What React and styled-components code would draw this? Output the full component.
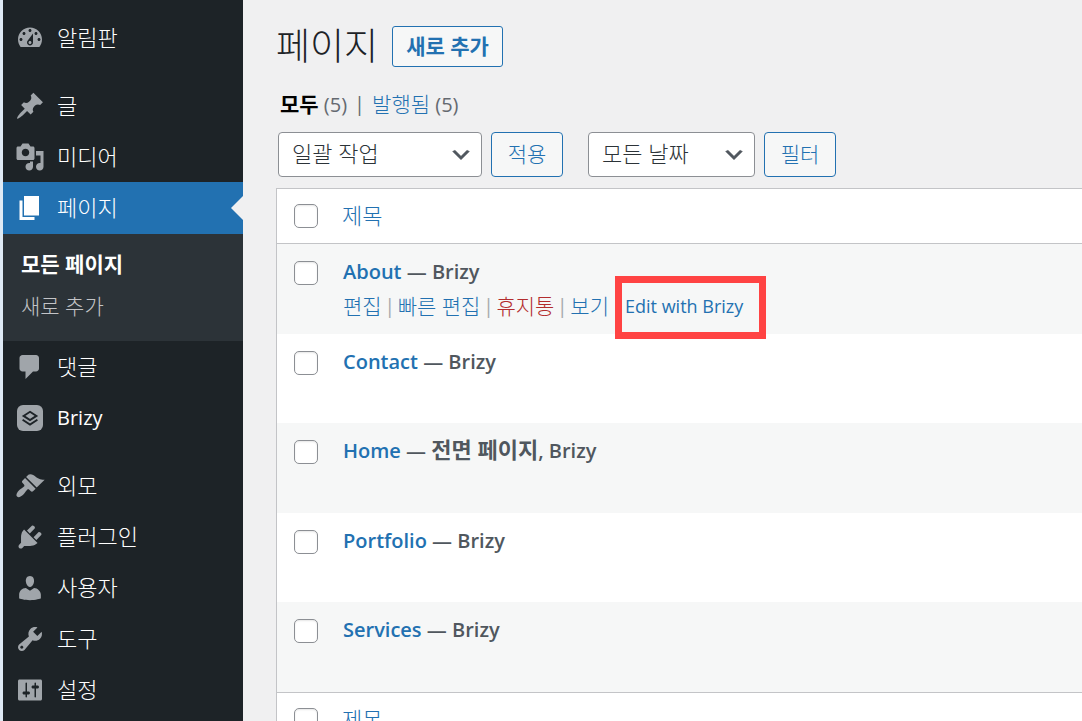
import React, { useState } from 'react';
import styled, { createGlobalStyle } from 'styled-components';

const GlobalStyle = createGlobalStyle`
  * {
    box-sizing: border-box;
  }
  body {
    margin: 0;
    background: #f0f0f1;
    color: #3c434a;
    font-family: 'Open Sans', 'Noto Sans CJK KR', sans-serif;
    font-size: 20px;
    line-height: 28px;
  }
  a {
    color: #2271b1;
    text-decoration: none;
  }
`;

const Page = styled.div`
  display: flex;
  min-height: 100vh;
  max-height: 100vh;
  overflow: hidden;
  border-left: 3px solid #dfeaf5;
`;

const Sidebar = styled.nav`
  flex: none;
  width: 240px;
  padding-top: 12px;
  background: #1d2327;
`;

const MenuGroup = styled.ul`
  list-style: none;
  margin: 0 0 17px;
  padding: 0;
`;

const MenuLink = styled.a`
  position: relative;
  display: flex;
  align-items: center;
  gap: 12px;
  height: ${props => (props.$current ? '52px' : '51px')};
  padding-left: 12px;
  color: #fff;
  background: ${props => (props.$current ? '#2271b1' : 'none')};
  svg {
    width: 30px;
    height: 30px;
    fill: ${props => (props.$current ? '#fff' : '#a0a5aa')};
  }
  &::after {
    content: '';
    display: ${props => (props.$current ? 'block' : 'none')};
    position: absolute;
    right: 0;
    border: 12px solid transparent;
    border-left-width: 0;
    border-right-color: #f0f0f1;
  }
`;

const MenuLabel = styled.span`
  padding-bottom: ${props => (props.$latin ? '0' : '2px')};
  font-size: ${props => (props.$latin ? '20px' : '22px')};
  font-weight: ${props => (props.$latin ? 400 : 300)};
`;

const SubMenu = styled.ul`
  list-style: none;
  margin: 0;
  padding: 9px 18px 14px;
  background: #2c3338;
`;

const SubLink = styled.a`
  display: block;
  font-size: 21px;
  line-height: 42px;
  font-weight: ${props => (props.$current ? 600 : 300)};
  color: ${props => (props.$current ? '#fff' : '#c3c4c7')};
`;

const Content = styled.main`
  flex: 1;
  min-width: 0;
  padding: 22px 0 0 33px;
`;

const Heading = styled.div`
  display: flex;
  align-items: center;
  gap: 14px;
  h1 {
    margin: 0;
    font-size: 37px;
    font-weight: 300;
    line-height: 48px;
    color: #1d2327;
  }
`;

const AddLink = styled.a`
  padding: 0 13px;
  border: 1px solid #2271b1;
  border-radius: 3px;
  background: #f6f7f7;
  font-size: 21px;
  font-weight: 600;
  line-height: 39px;
`;

const Filters = styled.ul`
  display: flex;
  gap: 7px;
  list-style: none;
  margin: 20px 0 13px;
  padding: 0 4px;
  color: #646970;
  strong {
    color: #000;
    font-size: 21px;
    font-weight: 600;
  }
  a {
    font-size: 21px;
    font-weight: 300;
  }
`;

const Toolbar = styled.form`
  display: flex;
  gap: 9px;
  padding-left: 2px;
  margin-bottom: 11px;
`;

const SelectWrap = styled.div`
  position: relative;
  width: ${props => props.$width}px;
  svg {
    position: absolute;
    right: 9px;
    top: 11px;
    width: 24px;
    height: 24px;
    fill: #50575e;
    stroke: #50575e;
    stroke-width: 0.4;
    pointer-events: none;
  }
`;

const Select = styled.select`
  appearance: none;
  width: 100%;
  height: 45px;
  padding: 0 36px 4px 13px;
  border: 1px solid #8c8f94;
  border-radius: 4px;
  background: #fff;
  color: #2c3338;
  font-family: inherit;
  font-size: 22px;
  font-weight: 300;
`;

const Button = styled.button`
  width: 72px;
  height: 45px;
  margin-right: ${props => props.$after || 0}px;
  padding: 0 0 4px;
  border: 1px solid #2271b1;
  border-radius: 4px;
  background: #f6f7f7;
  color: #2271b1;
  font-family: inherit;
  font-size: 21px;
  font-weight: 300;
`;

const Table = styled.table`
  width: 100%;
  border-collapse: separate;
  border-spacing: 0;
  border: 1px solid #c3c4c7;
  border-right: 0;
  background: #fff;
  th, td {
    padding: 0;
    text-align: left;
    vertical-align: top;
    font-weight: 400;
  }
  thead th {
    height: 55px;
    padding-top: 12px;
    border-bottom: 1px solid #c3c4c7;
  }
  tfoot th {
    height: 55px;
    padding-top: 12px;
    border-top: 1px solid #c3c4c7;
  }
  tr > :first-child {
    width: 65px;
    padding-top: 15px;
    padding-left: 17px;
  }
`;

const Row = styled.tr`
  height: 89px;
  &:nth-child(odd) {
    height: 90px;
    background: #f6f7f7;
  }
  > :nth-child(2) {
    padding: 14px 0 0 1px;
  }
  && > :first-child {
    padding-top: 17px;
  }
`;

const Checkbox = styled.input`
  appearance: none;
  display: block;
  width: 24px;
  height: 24px;
  margin: 0;
  border: 1px solid #8c8f94;
  border-radius: 5px;
  background: #fff;
  box-shadow: inset 0 1px 2px rgba(0, 0, 0, 0.1);
  &:checked {
    background: #2271b1;
  }
`;

const SortLink = styled.a`
  font-size: 22px;
  font-weight: 300;
`;

const Title = styled.strong`
  display: block;
  font-weight: 600;
  color: #50575e;
`;

const FrontPage = styled.span`
  font-size: 22px;
  line-height: 20px;
`;

const RowActions = styled.div`
  display: flex;
  margin-top: 6px;
  color: #a7aaad;
  span {
    width: 16px;
    text-align: center;
  }
`;

const ActionLink = styled.a`
  position: relative;
  font-size: ${props => (props.$latin ? '18px' : '21px')};
  font-weight: ${props => (props.$latin ? 400 : 300)};
  color: ${props => (props.$danger ? '#b32d2e' : '#2271b1')};
`;

const Highlight = styled.i`
  position: absolute;
  top: -16px;
  right: -23px;
  bottom: -19px;
  left: -10px;
  border: 7px solid #ff4343;
  pointer-events: none;
`;

const icons = {
  dashboard: 'M3.76 16h12.48c1.1-1.37 1.76-3.11 1.76-5 0-4.42-3.58-8-8-8s-8 3.58-8 8c0 1.89.66 3.63 1.76 5zM10 4c.55 0 1 .45 1 1s-.45 1-1 1-1-.45-1-1 .45-1 1-1zM6 6c.55 0 1 .45 1 1s-.45 1-1 1-1-.45-1-1 .45-1 1-1zm8 0c.55 0 1 .45 1 1s-.45 1-1 1-1-.45-1-1 .45-1 1-1zm-5.37 5.55L12 7v6c0 1.1-.9 2-2 2s-2-.9-2-2c0-.57.24-1.08.63-1.45zM4 10c.55 0 1 .45 1 1s-.45 1-1 1-1-.45-1-1 .45-1 1-1zm12 0c.55 0 1 .45 1 1s-.45 1-1 1-1-.45-1-1 .45-1 1-1zm-5 3c0-.55-.45-1-1-1s-1 .45-1 1 .45 1 1 1 1-.45 1-1z',
  post: 'M10.44 3.02l1.82-1.82 6.36 6.35-1.83 1.82c-1.05-.68-2.48-.57-3.41.36l-.75.75c-.92.93-1.04 2.35-.35 3.41l-1.83 1.82-2.41-2.41-2.8 2.79c-.42.42-3.38 2.71-3.8 2.29s1.86-3.39 2.28-3.81l2.79-2.79L4.1 9.36l1.83-1.82c1.05.69 2.48.57 3.4-.36l.75-.75c.93-.92 1.05-2.35.36-3.41z',
  media: 'M13 11V4c0-.55-.45-1-1-1h-1.67L9 1H5L3.67 3H2c-.55 0-1 .45-1 1v7c0 .55.45 1 1 1h10c.55 0 1-.45 1-1zM7 4.5c1.38 0 2.5 1.12 2.5 2.5S8.38 9.5 7 9.5 4.5 8.38 4.5 7 5.62 4.5 7 4.5zM14 6h5v10.5c0 1.38-1.12 2.5-2.5 2.5S14 17.88 14 16.5s1.12-2.5 2.5-2.5c.17 0 .34.02.5.05V9h-3V6zm-4 8.05V13h2v3.5c0 1.38-1.12 2.5-2.5 2.5S7 17.88 7 16.5 8.12 14 9.5 14c.17 0 .34.02.5.05z',
  page: 'M6 15V2h10v13H6zm-1 1h8v2H3V5h2v11z',
  comments: 'M5 2h9c1.1 0 2 .9 2 2v7c0 1.1-.9 2-2 2h-2l-5 5v-5H5c-1.1 0-2-.9-2-2V4c0-1.1.9-2 2-2z',
  appearance: 'M14.48 11.06L7.41 3.99l1.5-1.5c.5-.56 2.3-.47 3.51.32 1.21.8 1.43 1.28 2.91 2.1 1.18.64 2.45 1.26 4.45.85zm-.71.71L6.7 4.7 4.93 6.47c-.39.39-.39 1.02 0 1.41l1.06 1.06c.39.39.39 1.03 0 1.42-.6.6-1.43 1.11-2.21 1.69-.35.26-.7.53-1.01.84C1.43 14.23.4 16.08 1.4 17.07c.99 1 2.84-.03 4.18-1.36.31-.31.58-.66.85-1.02.57-.78 1.08-1.61 1.69-2.21.39-.39 1.02-.39 1.41 0l1.06 1.06c.39.39 1.02.39 1.41 0z',
  plugins: 'M13.11 4.36L9.87 7.6 8 5.73l3.24-3.24c.35-.34 1.05-.2 1.56.32.52.51.66 1.21.31 1.55zm-8 1.77l.91-1.12 9.01 9.01-1.19.84c-.71.71-2.63 1.16-3.82 1.16H6.14L4.9 17.26c-.59.59-1.54.59-2.12 0-.59-.58-.59-1.53 0-2.12l1.24-1.24v-3.88c0-1.13.4-3.19 1.09-3.89zm7.26 3.97l3.24-3.24c.34-.35 1.04-.21 1.55.31.52.51.66 1.21.31 1.55l-3.24 3.25z',
  users: 'M10 9.25c-2.27 0-2.73-3.44-2.73-3.44C7 4.02 7.82 2 9.97 2c2.16 0 2.98 2.02 2.71 3.81 0 0-.41 3.44-2.68 3.44zm0 2.57L12.72 10c2.39 0 4.52 2.33 4.52 4.53v2.49s-3.65 1.13-7.24 1.13c-3.65 0-7.24-1.13-7.24-1.13v-2.49c0-2.25 1.94-4.48 4.47-4.48z',
  tools: 'M16.68 9.77c-1.34 1.34-3.3 1.67-4.95.99l-5.41 6.52c-.99.99-2.59.99-3.58 0s-.99-2.59 0-3.57l6.52-5.42c-.68-1.65-.35-3.61.99-4.95 1.28-1.28 3.12-1.62 4.72-1.06l-2.89 2.89 2.82 2.82 2.86-2.87c.53 1.58.18 3.39-1.08 4.65zM3.81 16.21c.4.39 1.04.39 1.43 0 .4-.4.4-1.04 0-1.43-.39-.4-1.03-.4-1.43 0-.39.39-.39 1.03 0 1.43z',
  settings: 'M18 16V4c0-.55-.45-1-1-1H3c-.55 0-1 .45-1 1v12c0 .55.45 1 1 1h14c.55 0 1-.45 1-1zM8 11h1c.55 0 1 .45 1 1s-.45 1-1 1H8v1.5c0 .28-.22.5-.5.5s-.5-.22-.5-.5V13H6c-.55 0-1-.45-1-1s.45-1 1-1h1V5.5c0-.28.22-.5.5-.5s.5.22.5.5V11zm5-2h-1c-.55 0-1-.45-1-1s.45-1 1-1h1V5.5c0-.28.22-.5.5-.5s.5.22.5.5V7h1c.55 0 1 .45 1 1s-.45 1-1 1h-1v5.5c0 .28-.22.5-.5.5s-.5-.22-.5-.5V9z',
  arrow: 'M5 6l5 5 5-5 2 1-7 7-7-7 2-1z'
};

const Icon = ({ name }) => (
  <svg viewBox="0 0 20 20" aria-hidden="true">
    <path d={icons[name]} />
  </svg>
);

const BrizyIcon = () => (
  <svg viewBox="0 0 30 30" aria-hidden="true">
    <rect x="2" y="2" width="26" height="26" rx="6" />
    <path d="M15 8.8l6.4 4.1-6.4 4.1-6.4-4.1z" fill="none" stroke="#1d2327" strokeWidth="1.9" />
    <path d="M7.6 16.8l7.4 4.7 7.4-4.7" fill="none" stroke="#1d2327" strokeWidth="1.9" />
  </svg>
);

const menu = [
  [{ icon: 'dashboard', label: '알림판' }],
  [
    { icon: 'post', label: '글' },
    { icon: 'media', label: '미디어' },
    { icon: 'page', label: '페이지', children: ['모든 페이지', '새로 추가'] },
    { icon: 'comments', label: '댓글' },
    { icon: 'brizy', label: 'Brizy' }
  ],
  [
    { icon: 'appearance', label: '외모' },
    { icon: 'plugins', label: '플러그인' },
    { icon: 'users', label: '사용자' },
    { icon: 'tools', label: '도구' },
    { icon: 'settings', label: '설정' }
  ]
];

const pages = [
  { title: 'About', actions: true },
  { title: 'Contact' },
  { title: 'Home', front: true },
  { title: 'Portfolio' },
  { title: 'Services' }
];

function MenuItem({ item }) {
  const current = Boolean(item.children);
  const isBrizy = item.icon === 'brizy';
  return (
    <li>
      <MenuLink href="#" $current={current}>
        {isBrizy ? <BrizyIcon /> : <Icon name={item.icon} />}
        <MenuLabel $latin={isBrizy}>{item.label}</MenuLabel>
      </MenuLink>
      {current && (
        <SubMenu>
          {item.children.map((label, i) => (
            <li key={label}><SubLink href="#" $current={i === 0}>{label}</SubLink></li>
          ))}
        </SubMenu>
      )}
    </li>
  );
}

function Dropdown({ label, width }) {
  return (
    <SelectWrap $width={width}>
      <Select aria-label={label}>
        <option>{label}</option>
      </Select>
      <Icon name="arrow" />
    </SelectWrap>
  );
}

function App() {
  const [selected, setSelected] = useState([]);
  const allSelected = selected.length === pages.length;
  const toggleAll = () => setSelected(allSelected ? [] : pages.map(p => p.title));
  const toggle = title => setSelected(
    selected.includes(title) ? selected.filter(t => t !== title) : [...selected, title]
  );

  const columns = (
    <tr>
      <th><Checkbox type="checkbox" aria-label="모두" checked={allSelected} onChange={toggleAll} /></th>
      <th><SortLink href="#">제목</SortLink></th>
    </tr>
  );

  return (
    <Page>
      <GlobalStyle />
      <Sidebar>
        {menu.map((group, i) => (
          <MenuGroup key={i}>
            {group.map(item => <MenuItem key={item.label} item={item} />)}
          </MenuGroup>
        ))}
      </Sidebar>
      <Content>
        <Heading>
          <h1>페이지</h1>
          <AddLink href="#">새로 추가</AddLink>
        </Heading>
        <Filters>
          <li><strong>모두</strong> (5)</li>
          <li>|</li>
          <li><a href="#">발행됨</a> (5)</li>
        </Filters>
        <Toolbar onSubmit={e => e.preventDefault()}>
          <Dropdown label="일괄 작업" width={204} />
          <Button $after={16}>적용</Button>
          <Dropdown label="모든 날짜" width={167} />
          <Button>필터</Button>
        </Toolbar>
        <Table>
          <thead>{columns}</thead>
          <tbody>
            {pages.map(page => (
              <Row key={page.title}>
                <td>
                  <Checkbox
                    type="checkbox"
                    aria-label={page.title}
                    checked={selected.includes(page.title)}
                    onChange={() => toggle(page.title)}
                  />
                </td>
                <td>
                  <Title>
                    <a href="#">{page.title}</a> — {page.front && <><FrontPage>전면 페이지</FrontPage>, </>}Brizy
                  </Title>
                  {page.actions && (
                    <RowActions>
                      <ActionLink href="#">편집</ActionLink>
                      <span>|</span>
                      <ActionLink href="#">빠른 편집</ActionLink>
                      <span>|</span>
                      <ActionLink href="#" $danger>휴지통</ActionLink>
                      <span>|</span>
                      <ActionLink href="#">보기</ActionLink>
                      <span>|</span>
                      <ActionLink href="#" $latin>Edit with Brizy<Highlight /></ActionLink>
                    </RowActions>
                  )}
                </td>
              </Row>
            ))}
          </tbody>
          <tfoot>{columns}</tfoot>
        </Table>
      </Content>
    </Page>
  );
}

export default App;
